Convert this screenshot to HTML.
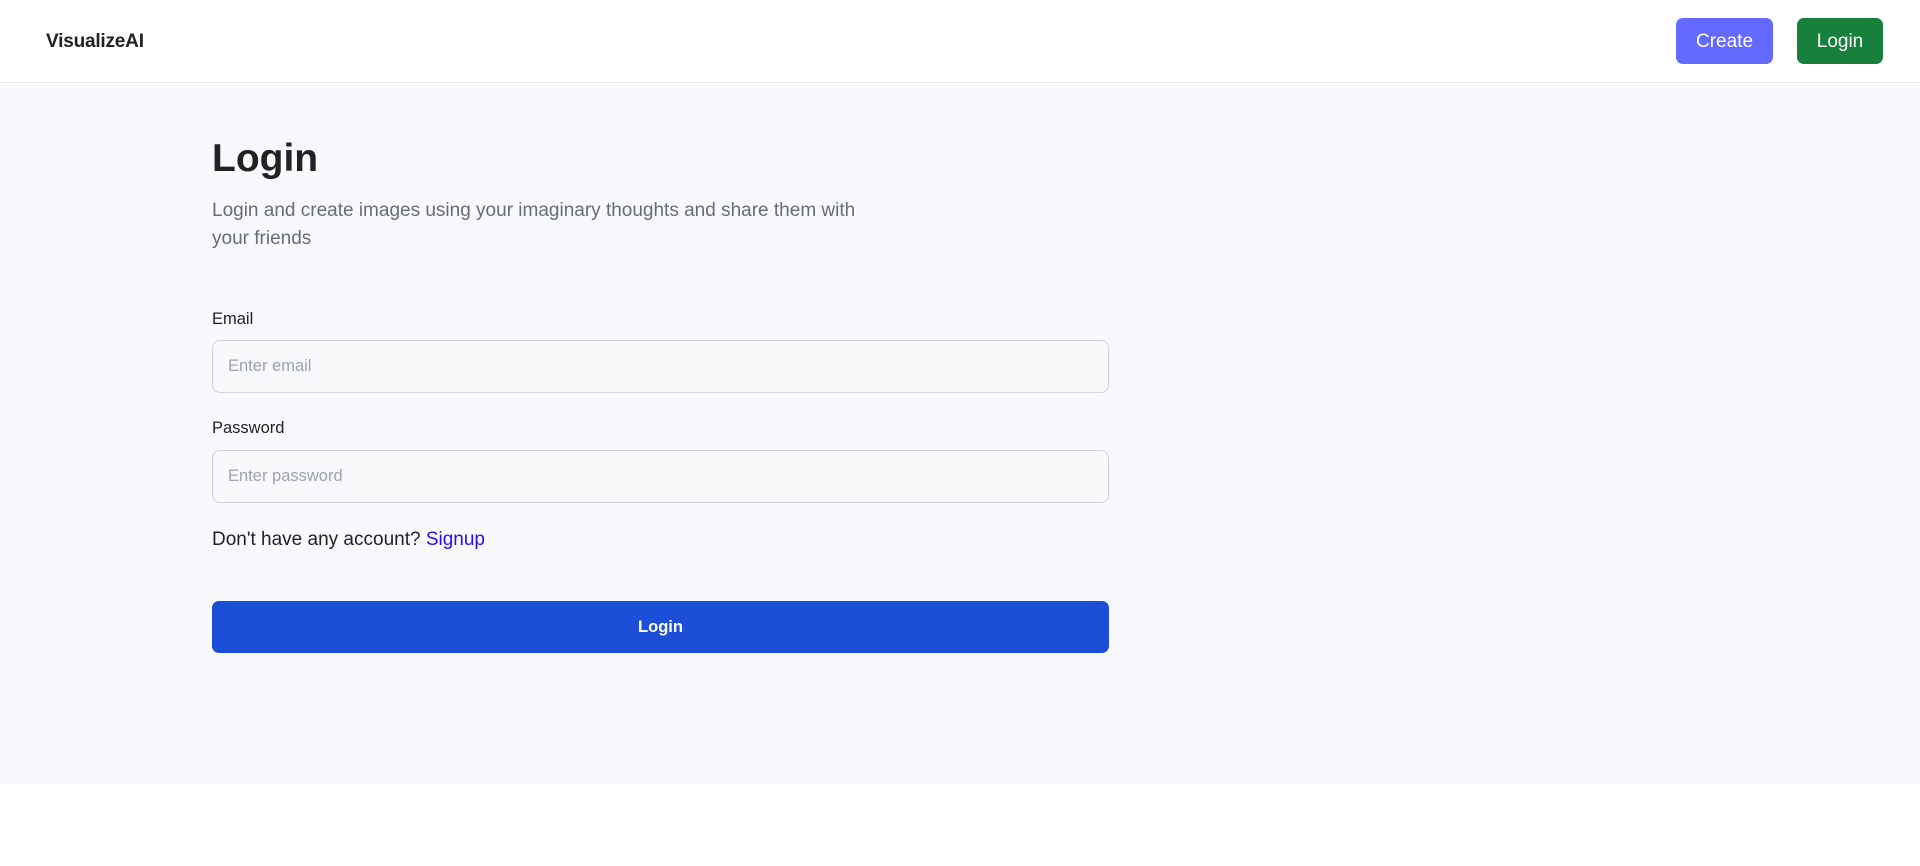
<!DOCTYPE html>
<html><head><style>
*{box-sizing:border-box;margin:0;padding:0}
body{width:1920px;height:866px;background:#fff;font-family:"Liberation Sans",Arial,sans-serif;position:relative;overflow:hidden}
.nav{position:absolute;left:0;top:0;width:1920px;height:83px;background:#fff;border-bottom:1px solid #e6e8ee}
.logo{position:absolute;left:46px;top:31px;font-size:19px;font-weight:800;color:#222;letter-spacing:-0.2px}
.btn{position:absolute;top:18px;height:46px;border-radius:7px;color:#fff;font-size:19px;display:flex;align-items:center;justify-content:center;padding-top:2px}
.main{position:absolute;left:0;top:84px;width:1920px;height:700px;background:#f8f9fc}
.abs{position:absolute}
h1{position:absolute;left:212px;top:137px;font-size:39px;font-weight:800;color:#222}
.sub{left:212px;top:197px;width:670px;font-size:19px;line-height:28px;color:#666e75}
.lab{left:212px;font-size:16.5px;color:#222}
.inp{left:212px;width:897px;height:53px;border:1px solid #d1d5db;border-radius:8px;background:#f8f9fa;font-size:16.5px;color:#9ca3af;padding-left:15px;display:flex;align-items:center}
</style></head><body>
<div class="nav">
<div class="logo">VisualizeAI</div>
<div class="btn" style="left:1676px;width:97px;background:#6469ff">Create</div>
<div class="btn" style="left:1797px;width:86px;background:#16803c">Login</div>
</div>
<div class="main"></div>
<h1>Login</h1>
<div class="abs sub">Login and create images using your imaginary thoughts and share them with your friends</div>
<div class="abs lab" style="top:310px">Email</div>
<div class="abs inp" style="top:340px">Enter email</div>
<div class="abs lab" style="top:419px">Password</div>
<div class="abs inp" style="top:450px">Enter password</div>
<div class="abs" style="left:212px;top:529px;font-size:19px;color:#222">Don't have any account? <span style="color:#2a0df5">Signup</span></div>
<div class="abs" style="left:212px;top:601px;width:897px;height:52px;background:#1d4ed8;border-radius:7px;color:#fff;font-size:16.5px;font-weight:bold;display:flex;align-items:center;justify-content:center">Login</div>
</body></html>
